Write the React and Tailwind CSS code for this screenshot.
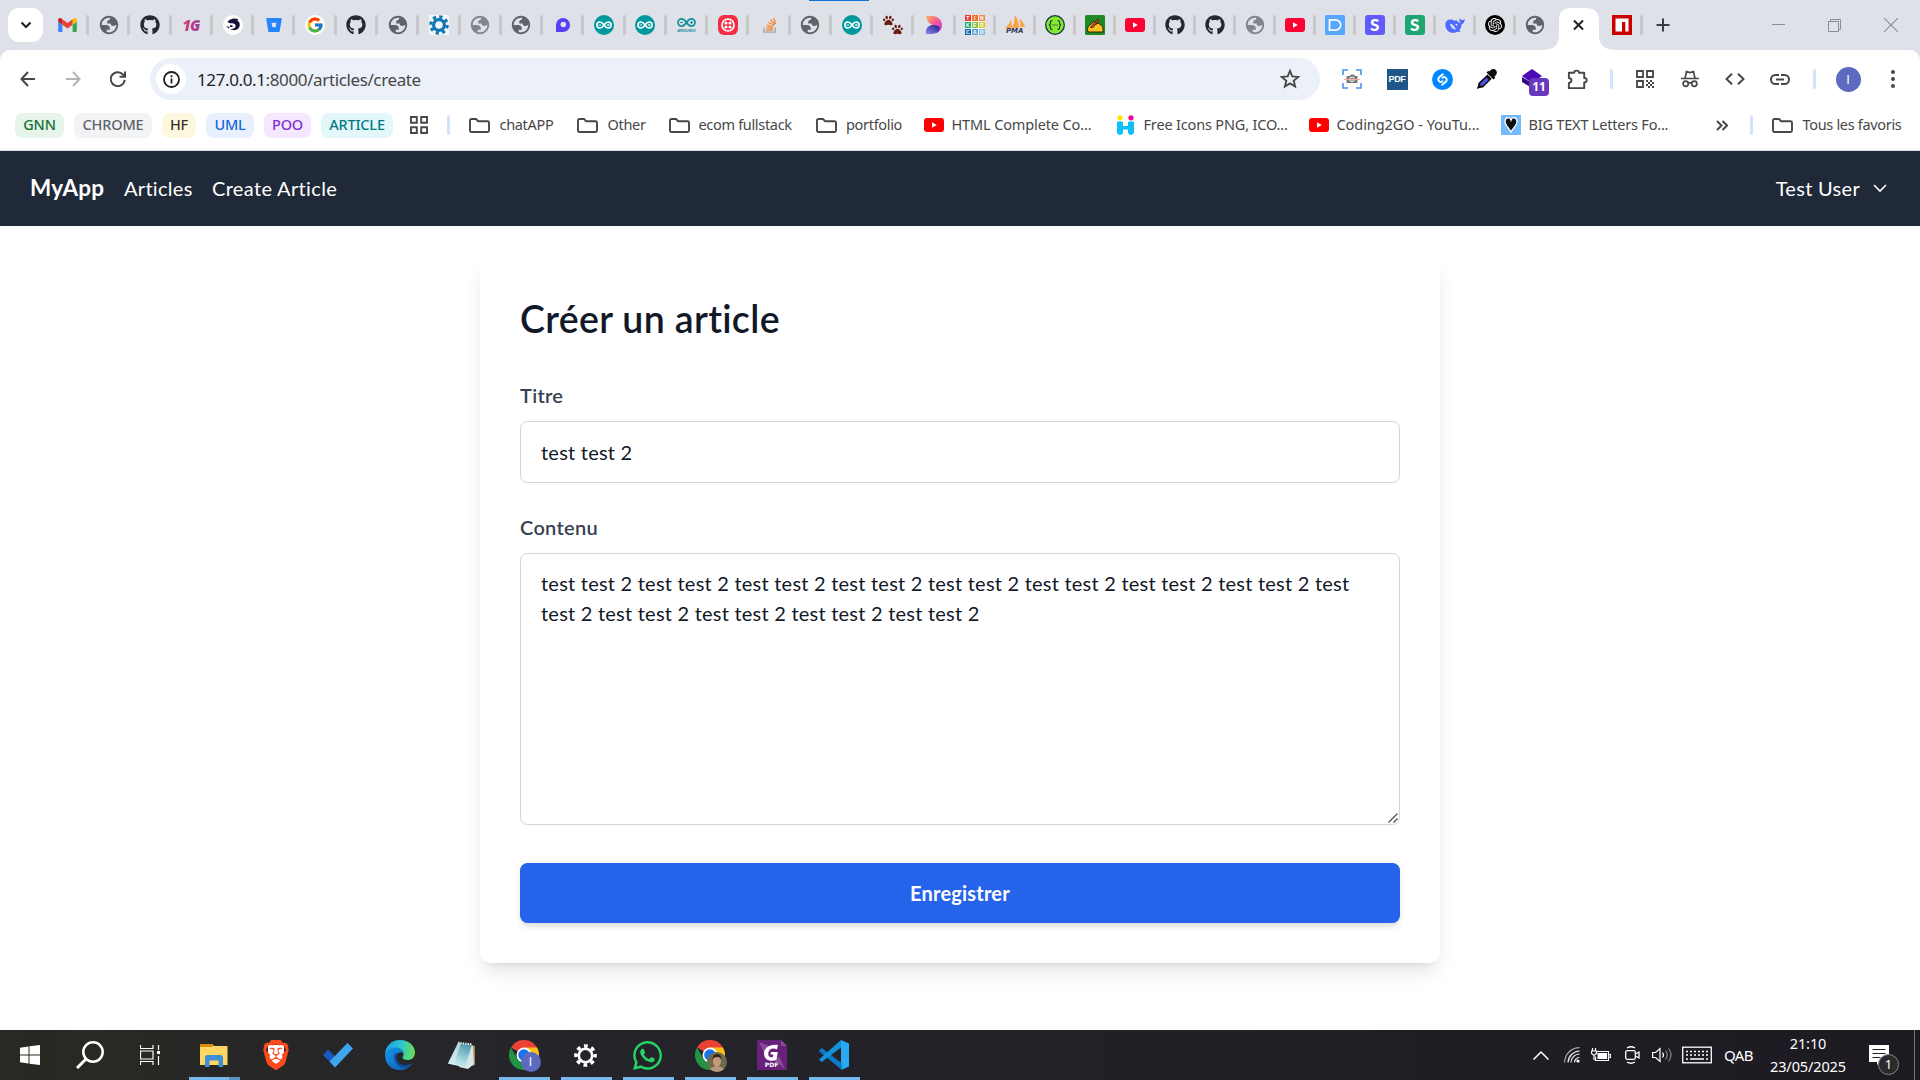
import React from "react";
import { FaGithub, FaBitbucket, FaPaw, FaWhatsapp } from "react-icons/fa";
import { FcGoogle } from "react-icons/fc";
import { SiOpenai, SiBrave } from "react-icons/si";

/* ---------- favicons ---------- */

const Globe = ({ light }) => (
  <svg className={light ? "size-[22px] text-[#80868b]" : "size-[22px] text-[#5f6368]"} viewBox="0 0 24 24" fill="currentColor" fillRule="evenodd">
    <path d="M12 2C6.480 2 2 6.480 2 12s4.480 10 10 10 10-4.480 10-10S17.520 2 12 2zM4 12h4.400c3.407.022 4.922 1.730 4.543 5.127H9.488v2.470a8.004 8.004 0 0 0 10.498-8.083C19.327 12.504 18.332 13 17 13c-2.137 0-3.206-.916-3.206-2.750h-3.748c-.274-2.728.683-4.092 2.870-4.092 0-.975.327-1.597.811-1.970A8.004 8.004 0 0 0 4 12z" />
  </svg>
);

const Gmail = () => (
  <svg className="h-[14px] w-[19px]" viewBox="52 42 88 66">
    <path fill="#4285f4" d="M58 108h14V74L52 59v43c0 3.320 2.690 6 6 6" />
    <path fill="#34a853" d="M120 108h14c3.320 0 6-2.690 6-6V59l-20 15" />
    <path fill="#fbbc04" d="M120 48v26l20-15v-8c0-7.420-8.470-11.650-14.400-7.200" />
    <path fill="#ea4335" d="M72 74V48l24 18 24-18v26L96 92" />
    <path fill="#c5221f" d="M52 51v8l20 15V48l-5.600-4.200c-5.940-4.450-14.400-.22-14.400 7.200" />
  </svg>
);

const GitHub = () => <FaGithub className="size-5 text-[#24292f]" />;

const OneG = () => (
  <span className="bg-gradient-to-r from-[#e0306e] to-[#9a3f9c] bg-clip-text pr-px font-['Open_Sans',sans-serif] text-[15px] leading-5 font-extrabold tracking-[-1px] text-transparent italic">1G</span>
);

const Whale = () => (
  <svg className="size-5" viewBox="0 0 20 20">
    <circle cx="10" cy="10" r="10" fill="#fff" />
    <path d="M4.500 7C6.500 3.500 11.500 2.600 15.500 4.200c-.8.400-1 .7-1.100 1.200 2.600 1.500 3 4.700 1.600 7.100-1.800 3-5.800 3.600-9.500 1.300 3.300.6 5.600-.3 6-2.300.4-1.700-.6-2.900-2.800-3.200C8 8.200 6.500 8.400 4.500 7z" fill="#14123a" />
    <path d="M2.800 11c1.600.8 3 .9 4.200.4L5.600 13.600zM7 10.300h2.500v1.600H7z" fill="#14123a" />
  </svg>
);

const Bitbucket = () => <FaBitbucket className="size-[16px] text-[#2684ff]" />;

const Google = () => (
  <span className="grid size-5 place-items-center rounded-full bg-white"><FcGoogle className="size-[18px]" /></span>
);

const Gear = () => (
  <svg className="size-5 bg-[#f4f7fa]" viewBox="0 0 20 20" fill="none" stroke="#0f78b4">
    <circle cx="10" cy="10" r="5.400" strokeWidth="3.200" />
    <circle cx="10" cy="10" r="8.200" strokeWidth="3.200" strokeDasharray="3.200 3.240" />
  </svg>
);

const PurpleDrop = () => (
  <svg className="size-4" viewBox="0 0 16 16">
    <path d="M1 15V8a7 7 0 1 1 7 7z" fill="#5b3df5" />
    <circle cx="8.300" cy="7.500" r="2.800" fill="#dee1e8" />
  </svg>
);

const Loops = ({ color }) => (
  <g fill="none" stroke={color} strokeWidth="1.500">
    <path d="M10 10C8.500 7.800 7.500 7 5.900 7a3 3 0 0 0 0 6c1.600 0 2.600-.8 4.100-3zM10 10c1.500-2.200 2.500-3 4.100-3a3 3 0 0 1 0 6c-1.600 0-2.600-.8-4.100-3z" />
    <path d="M4.600 10h2.400M13 10h2.400M14.200 8.800v2.400" strokeWidth=".9" />
  </g>
);

const Arduino = () => (
  <svg className="size-5" viewBox="0 0 20 20">
    <circle cx="10" cy="10" r="10" fill="#00979d" />
    <Loops color="#fff" />
  </svg>
);

const ArduinoText = () => (
  <span className="flex w-5 flex-col items-center">
    <svg className="h-[11px] w-[19px]" viewBox="2 5.500 16 9" preserveAspectRatio="none"><Loops color="#12919a" /></svg>
    <span className="font-['Liberation_Sans',sans-serif] text-[4px] leading-[5px] font-bold text-[#12919a]">ARDUINO</span>
  </span>
);

const Twilio = () => (
  <svg className="size-5" viewBox="0 0 20 20">
    <rect width="20" height="20" rx="6" fill="#f22f46" />
    <circle cx="10" cy="10" r="6" fill="none" stroke="#fff" strokeWidth="1.700" />
    <g fill="#fff"><circle cx="8" cy="8" r="1.600" /><circle cx="12" cy="8" r="1.600" /><circle cx="8" cy="12" r="1.600" /><circle cx="12" cy="12" r="1.600" /></g>
  </svg>
);

const StackOverflow = () => (
  <svg className="size-[17px]" viewBox="0 0 16 18" fill="none">
    <path d="M2 11v5h12v-5" stroke="#a5a8ad" strokeWidth="1.500" />
    <path d="M4.300 13.800h7.200M4.500 11.300l7 .7M5.200 8.600l6.700 2M6.800 5.500l6 3.600M9.200 2.800l4.300 5.300M12.400 1l2 6.400" stroke="#f48024" strokeWidth="1.300" />
  </svg>
);

const Paws = () => (
  <span className="flex size-5 flex-col justify-between text-[#6a1b14]">
    <FaPaw className="size-[11px] self-start" />
    <FaPaw className="-mt-1 size-[11px] self-end" />
  </span>
);

const Swirl = () => (
  <svg className="h-[18px] w-4" viewBox="0 0 16 18">
    <defs>
      <linearGradient id="swirlTop" x1="0" y1="0" x2="1" y2="1"><stop offset="0" stopColor="#ffb054" /><stop offset=".5" stopColor="#f7569b" /><stop offset="1" stopColor="#a93df0" /></linearGradient>
      <linearGradient id="swirlLow" x1="1" y1="0" x2="0" y2="1"><stop offset="0" stopColor="#221a75" /><stop offset="1" stopColor="#8a8bff" /></linearGradient>
    </defs>
    <path d="M0 0h6c6 0 10 4 10 9 0 4-2.500 7-6 8.500L7 9C4 8 1 6 0 0z" fill="url(#swirlTop)" />
    <path d="M0 18c-1-6 3-9 7-9 3 0 6 1 7 3-1 4-5 6-9 6z" fill="url(#swirlLow)" />
  </svg>
);

const TINKER = [
  ["T", "bg-[#e8382b]"], ["I", "bg-[#f37021]"], ["N", "bg-[#f08a4a]"],
  ["K", "bg-[#27a567]"], ["E", "bg-[#83c341]"], ["R", "bg-[#d3c928]"],
  ["C", "bg-[#1565ad]"], ["A", "bg-[#5ba3d9]"], ["D", "bg-[#7fb9e0]"],
];
const Tinkercad = () => (
  <span className="grid size-5 grid-cols-3 gap-px bg-white">
    {TINKER.map(([l, c]) => (
      <span key={l} className={`${c} grid place-items-center font-['Liberation_Sans',sans-serif] text-[5px] leading-[6px] font-bold text-white`}>{l}</span>
    ))}
  </span>
);

const Pma = () => (
  <span className="flex flex-col items-center">
    <svg className="h-[13px] w-5" viewBox="0 0 20 13">
      <path d="M0 13C3 11 5 8 6 4l1 9zM7 13C9 9 10 5 9.500 0c3 3 4.500 8 4.500 13zM15 12c.5-4 .2-7-1-9 3 2 5 6 6 9z" fill="#f9a53f" />
    </svg>
    <span className="font-['DejaVu_Sans',sans-serif] text-[7px] leading-[7px] font-bold text-[#35365c] italic">PMA</span>
  </span>
);

const Swagger = () => (
  <svg className="size-5" viewBox="0 0 20 20">
    <circle cx="10" cy="10" r="9.300" fill="#85ea2d" stroke="#173647" strokeWidth="1.300" />
    <path d="M7.500 5.500c-1.500 0-2 .5-2 1.800 0 1.600 0 2.400-1.500 2.700 1.500.3 1.500 1.100 1.500 2.700 0 1.300.5 1.800 2 1.800M12.500 5.500c1.500 0 2 .5 2 1.800 0 1.600 0 2.400 1.500 2.700-1.500.3-1.500 1.100-1.500 2.700 0 1.300-.5 1.800-2 1.800" fill="none" stroke="#173647" strokeWidth="1.200" />
    <path d="M7.300 10h1.200M9.400 10h1.200M11.500 10h1.200" stroke="#173647" strokeWidth="1.200" />
  </svg>
);

const Note = () => (
  <svg className="size-5" viewBox="0 0 20 20">
    <rect width="20" height="20" rx="1.500" fill="#1f8a24" />
    <path d="M2.500 14.500c0-2.500 1.500-4 4-5.500l2-3 2 3.500 3-1.500 1.500 1.500c2 .5 3 2.500 3 5V17H3z" fill="#fcc21b" stroke="#3a1d0a" strokeWidth="1" />
    <path d="M5.500 12.500L12.500 4l1.500 1.300L8 12.500z" fill="#e0402f" stroke="#3a1d0a" strokeWidth=".8" />
  </svg>
);

const YouTube = ({ flat }) => (
  <svg className="h-[14px] w-5" viewBox="0 0 20 14">
    <rect width="20" height="14" rx="3" fill={flat ? "#f00" : "#ff0033"} />
    <path d="M8 4.200v5.600L12.800 7z" fill="#fff" />
  </svg>
);

const Letter = ({ bg, children }) => (
  <span className={`${bg} grid size-5 place-items-center rounded-[3px] font-['Lato',sans-serif] text-[17px] leading-5 font-black text-white`}>{children}</span>
);

const LetterD = () => (
  <svg className="size-5" viewBox="0 0 20 20">
    <rect width="20" height="20" rx="1.500" fill="#56a8ff" />
    <path d="M4.500 4.800h6a5.200 5.200 0 0 1 0 10.400h-6z" fill="none" stroke="#fff" strokeWidth="1.700" />
  </svg>
);

const DeepSeek = () => (
  <svg className="h-[15px] w-5" viewBox="0 0 20 15">
    <path d="M8 2C4 .5.500 2.500.300 6.500.200 11.500 4 15 8.500 14.800c1.500 0 3-.5 4-1.300 1 .6 2 .7 2.800.3-.6-.6-.8-1.200-.8-2 1.500-1.800 2-3.600 2-5.600C18.500 5.800 19.700 4 19.800 1c-1 .8-1.800 1-2.700 1-.9 0-1.500-.3-2-2-1.200 1.800-.7 3.600.6 5-1.200.2-2.200-.5-3.200-1.700-.7-.9-1.300-1.200-2.200-1-.4.2-.2.700 0 1z" fill="#4d6bfe" />
    <path d="M5 5.500c2.500.5 4.500 3 6 6-3 .3-5.500-2-6-6z" fill="#dee1e8" />
    <circle cx="11.500" cy="6.800" r="1.100" fill="#dee1e8" />
  </svg>
);

const OpenAI = () => (
  <span className="grid size-5 place-items-center rounded-full bg-black"><SiOpenai className="size-[14px] text-white" /></span>
);

const Npm = () => (
  <svg className="size-5" viewBox="0 0 20 20">
    <rect width="20" height="20" fill="#cb0000" />
    <path d="M3.500 3.500h13v13h-3.200V7H10v9.500H3.500z" fill="#fff" />
  </svg>
);

const LightGlobe = () => <Globe light />;

const WIDE_TABS = [
  Gmail, Globe, GitHub, OneG, Whale, Bitbucket, Google, GitHub, Globe, Gear,
  LightGlobe, Globe, PurpleDrop, Arduino, Arduino, ArduinoText, Twilio,
  StackOverflow, Globe, Arduino, Paws, Swirl,
];
const TABS = [
  Tinkercad, Pma, Swagger, Note, YouTube, GitHub, GitHub, LightGlobe, YouTube, LetterD,
  () => <Letter bg="bg-[#625afa]">S</Letter>, () => <Letter bg="bg-[#1ea672]">S</Letter>,
  DeepSeek, OpenAI, Globe,
];

const Tab = ({ Icon, wide, last }) => (
  <div className={`${wide ? "w-[41.27px]" : "w-10"} flex h-5 shrink-0 items-center`}>
    <div className="flex h-5 flex-1 items-center justify-center pl-px"><Icon /></div>
    <div className={`${last ? "bg-transparent" : "bg-[#c7c7c9]"} h-5 w-[3px] rounded-full`} />
  </div>
);

const TabStrip = () => (
  <div className="relative flex h-[50px] bg-[#dee1e8]">
    <div className="absolute top-0 left-[809px] h-px w-[60px] bg-[#0a74d6]" />
    <div className="ml-2 flex h-[42px] w-[39.900px] items-end">
      <div className="grid h-[34px] w-[35px] place-items-center rounded-[11px] bg-white">
        <svg className="size-4" viewBox="0 0 16 16" fill="none" stroke="#1f1f1f" strokeWidth="2"><path d="M3.500 5.500L8 10l4.500-4.500" /></svg>
      </div>
    </div>
    <div className="flex items-center">
      {WIDE_TABS.map((I, i) => <Tab key={i} Icon={I} wide />)}
      {TABS.map((I, i) => <Tab key={i} Icon={I} last={i === TABS.length - 1} />)}
    </div>
    <svg className="-ml-[13px] mt-[7px] h-[43px] w-[73px]" viewBox="0 0 73 43">
      <path d="M0 43c10 0 16-5 16-14V13C16 5 20 1 28 1h15c8 0 13 4 13 12v16c0 9 6 14 17 14z" fill="#fff" />
      <path d="M31 13.500l9 9M40 13.500l-9 9" stroke="#1f1f1f" strokeWidth="2" />
    </svg>
    <div className="-ml-[13px] flex items-center"><Tab Icon={Npm} /></div>
    <div className="ml-[13px] flex items-center">
      <svg className="size-[14px]" viewBox="0 0 14 14" stroke="#3c3f42" strokeWidth="2"><path d="M7 .5v13M.5 7h13" /></svg>
    </div>
    <div className="ml-auto flex items-center gap-[43px] pr-[22px] text-[#8b8d91]">
      <svg className="size-[13px]" viewBox="0 0 13 13" stroke="currentColor"><path d="M0 5.500h13" /></svg>
      <svg className="size-[13px]" viewBox="0 0 13 13" fill="none" stroke="currentColor"><path d="M.5 2.500h10v10H.500zM2.500 2.500v-2h10v10h-2" /></svg>
      <svg className="size-[14px]" viewBox="0 0 13 13" stroke="currentColor"><path d="M0 0l13 13M13 0L0 13" /></svg>
    </div>
  </div>
);

/* ---------- toolbar ---------- */

const Ico = ({ className = "size-[22px]", vb = "0 0 24 24", w = 2, children }) => (
  <svg className={className} viewBox={vb} fill="none" stroke="currentColor" strokeWidth={w}>{children}</svg>
);
const Cell = ({ children }) => <div className="flex w-[45px] items-center justify-center">{children}</div>;
const ToolSep = () => <div className="mx-[10px] h-5 w-[3px] rounded-full bg-[#d3e3fd]" />;

const Toolbar = () => (
  <div className="flex h-[58px] items-center text-[#474747]">
    <div className="ml-[5.500px] flex w-[144.500px] shrink-0">
      <Cell><Ico className="size-4" vb="0 0 16 16"><path d="M15 8H1.500M8 1L1.500 8 8 15" /></Ico></Cell>
      <Cell><Ico className="size-4 text-[#b3b3b3]" vb="0 0 16 16"><path d="M1 8h13.500M8 1l6.500 7L8 15" /></Ico></Cell>
      <Cell><Ico className="size-4" vb="0 0 16 16"><path d="M14.700 9A7 7 0 1 1 13 3.500L15 5.500M15 .5v5.300H9.500" /></Ico></Cell>
    </div>
    <div className="flex h-[42px] w-[1170px] shrink-0 items-center rounded-full bg-[#ebf0f9] pr-[19px] pl-[6px]">
      <div className="grid size-[30px] place-items-center rounded-full bg-white">
        <Ico className="size-[17px] text-[#1f1f1f]" vb="0 0 17 17" w="1.800"><circle cx="8.500" cy="8.500" r="7.500" /><path d="M8.500 7.500v5M8.500 4.300v1.900" /></Ico>
      </div>
      <div className="ml-[11px] flex-1 pt-px font-['Noto_Sans',sans-serif] text-[17px] tracking-[-0.380px] text-[#474747]"><span className="text-[#1f1f1f]">127.0.0.1</span>:8000/articles/create</div>
      <Ico className="size-[22px]" w="2"><path d="M12 3.200l2.500 6 6.500.5-5 4.200 1.600 6.300L12 16.800l-5.600 3.400L8 13.900 3 9.700l6.500-.5z" /></Ico>
    </div>
    <div className="ml-auto flex items-center pr-[4.500px]">
      <Cell>
        <svg className="size-5" viewBox="0 0 20 20" fill="none">
          <path d="M1 6V1h5M14 1h5v5M19 14v5h-5M6 19H1v-5" stroke="#4f8df5" strokeWidth="1.600" />
          <path d="M4.500 7h3L9 5.500h3L13 7h2.500v7h-11z" fill="#7b7b7b" />
          <circle cx="10" cy="10.300" r="2.200" stroke="#fff" /><path d="M2 10.500h16" stroke="#f2aaa5" />
        </svg>
      </Cell>
      <Cell><span className="grid size-[21px] place-items-center bg-[#1d5687] font-['Liberation_Sans',sans-serif] text-[9px] leading-none font-bold tracking-[-0.300px] text-white">PDF</span></Cell>
      <Cell>
        <svg className="size-[21px]" viewBox="0 0 21 21" fill="none">
          <circle cx="10.500" cy="10.500" r="10.500" fill="#08f" />
          <path d="M10.800 5.200L7.500 8c-1.600 1.400-1.600 3-.4 4.200 1 1 2.400 1 3.400 0M10.200 15.800l3.300-2.800c1.600-1.400 1.600-3 .4-4.200-1-1-2.400-1-3.400 0" stroke="#fff" strokeWidth="1.900" strokeLinecap="round" />
        </svg>
      </Cell>
      <Cell>
        <svg className="size-5" viewBox="0 0 20 20">
          <path d="M12.500 2.500c2-3 5-3 6.500-1.200S20 6 17.300 7.600l1 1.200-1.800 1.700-7-7 1.800-1.700z" fill="#0a0a0a" />
          <path d="M10.500 5.500l4.200 4.200L6 18.500l-3.500.6L.5 20 0 19l1-2 .4-3z" fill="#0a0a0a" />
          <path d="M9.500 8.500l2.300 2.300L6 16.500l-3 .3.500-2.500z" fill="#4a55e8" />
        </svg>
      </Cell>
      <Cell>
        <div className="relative size-5">
          <svg className="size-5" viewBox="0 0 20 20"><path d="M10 0l10 7-10 7L0 7z" fill="#4b0bb5" /><path d="M0 8l10 6v5L0 13z" fill="#2f0a80" /></svg>
          <span className="absolute top-[9px] left-[7px] grid h-[18px] w-5 place-items-center rounded-[4px] bg-[#6938be] font-['Open_Sans',sans-serif] text-[12px] leading-none font-bold text-white">11</span>
        </div>
      </Cell>
      <Cell><Ico className="size-[23px]" w="2"><path d="M3 5h5.500c0-3 5-3 5 0H19v5.500c3.500 0 3.500 4.500 0 4.500v6H3v-5.500c3.500-.5 3.500-4.500 0-5z" strokeLinejoin="round" /></Ico></Cell>
      <ToolSep />
      <Cell>
        <Ico className="size-[18px]" vb="0 0 18 18" w="1.800"><path d="M1 1h6v6H1zM11 1h6v6h-6zM1 11h6v6H1z" /><path d="M10 11h2M14 11h2M12 13h2M16 13h2M10 15h2M14 15h2M12 17h2M16 17h2" /></Ico>
      </Cell>
      <Cell>
        <Ico className="size-[18px]" vb="0 0 18 18" w="1.700"><path d="M0 8.500h18M4 8.500L5.500 1.500l3.500 1 3.500-1L14 8.500" /><circle cx="4.700" cy="13.800" r="2.600" /><circle cx="13.300" cy="13.800" r="2.600" /><path d="M7.200 13.300c1-.8 2.600-.8 3.600 0" /></Ico>
      </Cell>
      <Cell><Ico className="h-3 w-5" vb="0 0 20 12"><path d="M7 .7L1.500 6 7 11.300M13 .7L18.500 6 13 11.300" /></Ico></Cell>
      <Cell><Ico className="h-[11px] w-5" vb="0 0 20 11"><path d="M9 1H5.500a4.500 4.500 0 0 0 0 9H9M11 1h3.500a4.500 4.500 0 0 1 0 9H11M6 5.500h8" /></Ico></Cell>
      <ToolSep />
      <Cell><span className="grid size-[25px] place-items-center rounded-full bg-[#5c6bc0] font-['Liberation_Sans',sans-serif] text-[13px] leading-none text-white">I</span></Cell>
      <Cell><svg className="h-[18px] w-1" viewBox="0 0 4 18" fill="currentColor"><circle cx="2" cy="2" r="2" /><circle cx="2" cy="9" r="2" /><circle cx="2" cy="16" r="2" /></svg></Cell>
    </div>
  </div>
);

/* ---------- bookmarks ---------- */

const Chip = ({ className, children }) => (
  <div className={`${className} flex h-[25px] shrink-0 items-center justify-center rounded-lg pb-px text-[14.500px] font-medium tracking-[-0.200px]`}>{children}</div>
);
const Folder = () => (
  <svg className="h-[15px] w-[21px]" viewBox="0 0 21 15" fill="none" stroke="#474747" strokeWidth="1.900"><path d="M1 12.500v-10Q1 1 2.500 1H7l2.200 2.200h9.300q1.500 0 1.500 1.500v7.800q0 1.500-1.500 1.500h-16Q1 14 1 12.500z" /></svg>
);
const Freepik = () => (
  <svg className="mr-px h-5 w-[19px]" viewBox="0 0 19 20">
    <circle cx="4" cy="2.800" r="2.600" fill="#ffe600" /><circle cx="15" cy="2.800" r="2.600" fill="#f5068c" />
    <path d="M1 7q3-1.500 6 0v4h5V7q3-1.500 6 0v11q-3 4-6 0v-3.500H7V18q-3 4-6 0z" fill="#0bc1f5" />
  </svg>
);
const Heart = () => (
  <svg className="size-5" viewBox="0 0 20 20">
    <rect width="20" height="20" fill="#74bbfb" />
    <path d="M10 17C8 13 4 10.500 4 6.500 4 2 9 1.500 10 5c1-3.500 6-3 6 1.500C16 10.500 12 13 10 17z" fill="#0b0f14" stroke="#fff" strokeWidth="1.300" />
  </svg>
);
const Mark = ({ icon, className, tight = "tracking-[-0.320px]", children }) => (
  <div className={`${className} flex shrink-0 items-center whitespace-nowrap`}>
    {icon}
    <span className={`${tight} text-[14.500px]`}>{children}</span>
  </div>
);
const BarSep = () => <div className="h-5 w-[3px] shrink-0 rounded-full bg-[#d3e3fd]" />;

const BookmarkBar = () => (
  <div className="flex h-[43px] items-start border-b border-[#dcdfe3] pt-[4px] font-['Noto_Sans',sans-serif] text-[#474747]">
    <div className="flex h-[26px] w-full items-center pl-[15px]">
      <div className="flex gap-[10px]">
        <Chip className="w-[49px] bg-[#e6f4ea] text-[#137333]">GNN</Chip>
        <Chip className="w-[78px] bg-[#f1f3f4] text-[#5f6368]">CHROME</Chip>
        <Chip className="w-[34px] bg-[#fef7e0] text-[#3c3025]">HF</Chip>
        <Chip className="w-[48px] bg-[#e8f0fe] text-[#1967d2]">UML</Chip>
        <Chip className="w-[47px] bg-[#f3e8fd] text-[#8430ce]">POO</Chip>
        <Chip className="w-[72px] bg-[#e4f7fb] text-[#007b83]">ARTICLE</Chip>
      </div>
      <div className="ml-[17px] flex w-[37px] shrink-0"><Ico className="size-[18px]" vb="0 0 18 18" w="1.900"><path d="M1 1h5.800v5.800H1zM11.200 1H17v5.800h-5.800zM1 11.200h5.800V17H1zM11.200 11.200H17V17h-5.800z" /></Ico></div>
      <BarSep />
      <div className="ml-[19px] flex">
        <Mark className="w-[108px] gap-[9.500px]" icon={<Folder />}>chatAPP</Mark>
        <Mark className="w-[91.500px] gap-[9.500px]" icon={<Folder />}>Other</Mark>
        <Mark className="w-[147.500px] gap-[9px]" icon={<Folder />}>ecom fullstack</Mark>
        <Mark className="w-[108px] gap-[9px]" icon={<Folder />}>portfolio</Mark>
        <Mark className="w-[192px] gap-[7.500px]" tight="tracking-[-0.130px]" icon={<YouTube flat />}>HTML Complete Co...</Mark>
        <Mark className="w-[193px] gap-[7.500px]" tight="tracking-[-0.170px]" icon={<Freepik />}>Free Icons PNG, ICO...</Mark>
        <Mark className="w-[192px] gap-[7.500px]" tight="tracking-[-0.060px]" icon={<YouTube flat />}>Coding2GO - YouTu...</Mark>
        <Mark className="w-[215px] gap-[7.500px]" tight="tracking-[-0.200px]" icon={<Heart />}>BIG TEXT Letters Fo...</Mark>
      </div>
      <Ico className="mr-[22px] h-[11px] w-3 shrink-0" vb="0 0 12 11"><path d="M1 1l4.500 4.500L1 10M6.500 1L11 5.500 6.500 10" /></Ico>
      <BarSep />
      <Mark className="ml-[19px] gap-[9.500px]" icon={<Folder />}>Tous les favoris</Mark>
    </div>
  </div>
);

/* ---------- page ---------- */

const Page = () => (
  <div className="flex h-[879px] flex-col bg-white font-['Lato',sans-serif] text-xl leading-[30px] tracking-[0.300px]">
    <nav className="flex h-[75px] shrink-0 items-center bg-[#1f2937] px-[30px] pb-[2px] text-white">
      <span className="w-[94px] text-[22.500px] font-bold tracking-[0.250px]">MyApp</span>
      <span className="w-[88px]">Articles</span>
      <span className="tracking-[0.350px]">Create Article</span>
      <span className="ml-auto">Test User</span>
      <svg className="mt-[2px] mr-[3px] ml-[13px] h-[9px] w-[14px]" viewBox="0 0 14 9" fill="none" stroke="currentColor" strokeWidth="1.600"><path d="M1 1l6 6 6-6" /></svg>
    </nav>
    <main className="mx-auto mt-[30px] flex w-[960px] flex-col rounded-[10px] bg-white p-10 shadow-[0_12.500px_18.750px_-3.750px_rgba(0,0,0,0.100),0_5px_7.500px_-5px_rgba(0,0,0,0.100)]">
      <h1 className="mb-10 text-[37.500px] leading-[46px] font-semibold tracking-[0.350px] text-[#111827]">Créer un article</h1>
      <label className="mb-[13px] leading-[26px] font-semibold text-[#374151]">Titre</label>
      <input readOnly defaultValue="test test 2" className="mb-[31px] h-[62px] rounded-[7.500px] border border-[#d1d5db] px-5 tracking-[0.230px] text-[#111827] outline-none" />
      <label className="mb-[13px] leading-[26px] font-semibold text-[#374151]">Contenu</label>
      <div className="relative mb-[38px] flex">
        <textarea readOnly className="h-[272px] w-full resize-none rounded-[7.500px] border border-[#d1d5db] px-5 pt-[14px] tracking-[0.230px] text-[#111827] outline-none" defaultValue={"test test 2 test test 2 test test 2 test test 2 test test 2 test test 2 test test 2 test test 2 test\ntest 2 test test 2 test test 2 test test 2 test test 2"} />
        <svg className="absolute right-[2px] bottom-[2px] size-[10px]" viewBox="0 0 10 10" stroke="#4a4a4a" strokeWidth="1.200"><path d="M.5 9.500l9-9M5.500 9.500l4-4" /></svg>
      </div>
      <button className="h-[60px] rounded-[7.500px] bg-[#2563eb] font-bold tracking-[0.200px] text-white shadow-[0_5px_7.500px_-1.250px_rgba(0,0,0,0.100),0_2.500px_5px_-2.500px_rgba(0,0,0,0.100)]">Enregistrer</button>
    </main>
  </div>
);

/* ---------- taskbar ---------- */

const Explorer = () => (
  <svg className="h-6 w-7" viewBox="0 0 28 24">
    <path d="M0 1h12l2 2h13.500v19H0z" fill="#fdd663" /><path d="M0 1h12.500v3H0z" fill="#d98f05" />
    <path d="M5 24V14.500q0-2.500 2.500-2.500h13q2.500 0 2.500 2.500V24h-4.500v-6.500h-9V24z" fill="#3f8fd6" />
  </svg>
);
const Brave = () => (
  <div className="relative grid size-[30px] place-items-center">
    <div className="absolute top-[5px] left-[7px] h-[19px] w-4 rounded-b-lg bg-white" />
    <SiBrave className="relative size-[30px] text-[#fb4a1d]" />
  </div>
);
const Todo = () => (
  <svg className="h-[25px] w-[30px]" viewBox="0 0 30 25"><path d="M0 12l5-5.500 12.500 12L12 24z" fill="#185abd" /><path d="M6.500 18.500L24.500 0 30 5.500 12 24.500z" fill="#41a5ee" /></svg>
);
const Edge = () => (
  <svg className="size-[30px]" viewBox="0 0 30 30">
    <defs>
      <linearGradient id="edgeTop" x1="0" y1=".4" x2="1" y2=".5"><stop offset="0" stopColor="#1a9de8" /><stop offset=".5" stopColor="#2bc3d2" /><stop offset="1" stopColor="#6be04e" /></linearGradient>
      <linearGradient id="edgeLow" x1="0" y1="0" x2="1" y2="1"><stop offset="0" stopColor="#1597e8" /><stop offset="1" stopColor="#0b5cad" /></linearGradient>
    </defs>
    <path d="M0 15C0 6 6.500 0 15 0c9 0 15 6 15 12.500 0 5-3.500 7.500-7.500 7.500-3.500 0-5-1.500-5-2.500s1-1.500 1-3.500c0-3-3-6-7-6C6 8 1.500 11.500 0 15z" fill="url(#edgeTop)" />
    <path d="M0 15c1-5 6-7.500 10.500-7.500 4 0 8 2.500 8 6-1-1-2.500-1.500-4-1-3 1-4 4-3 7.500 1.500 5 8 6.500 13.500 4.500l2.500-1.500c-3 5-8 7.300-13 7C6 30 0 23.500 0 15z" fill="url(#edgeLow)" />
    <path d="M11.500 12.500C7.500 14 8 23 15.500 27c4 1.500 8 .5 11.500-3.500-6 3-13 2-15-3.500-1-2.800-1-5 .5-7.500z" fill="#10499b" />
  </svg>
);
const Notepad = () => (
  <svg className="size-7" viewBox="0 0 28 28">
    <defs>
      <linearGradient id="padFace" x1=".7" y1="0" x2=".3" y2="1"><stop offset="0" stopColor="#4f97a8" /><stop offset=".6" stopColor="#9ed4de" /><stop offset="1" stopColor="#dff3f6" /></linearGradient>
    </defs>
    <path d="M24 4l3 1v19l-3 1z" fill="#a8834f" />
    <path d="M22 3.500l3 1.500 1 18-6 5-9-2z" fill="#d9e4e8" />
    <path d="M10 2l14 1.500-7 23L0 22.500z" fill="url(#padFace)" />
    <path d="M10 2l3 .3L6 23.800l-6-1.300z" fill="#d5edf1" opacity=".7" />
    <path d="M10 1.700l13.500 1.500" stroke="#e8e8e8" strokeWidth="2" strokeDasharray="1.400 1" />
  </svg>
);
const Chrome = ({ children }) => (
  <div className="relative size-[30px]">
    <svg className="size-[30px]" viewBox="0 0 30 30">
      <path d="M15 15L2 7.500A15 15 0 0 1 28 7.500z" fill="#ea4335" />
      <path d="M15 15l6.500 3.700L15 30A15 15 0 0 0 28 7.500H15z" fill="#fbc116" />
      <path d="M15 15l6.500 3.700L15 30A15 15 0 0 1 2 7.500l6.500 11.200z" fill="#229342" />
      <circle cx="15" cy="15" r="7.500" fill="#fff" /><circle cx="15" cy="15" r="5.800" fill="#1a73e8" />
    </svg>
    {children}
  </div>
);
const Cog = () => (
  <svg className="size-[23px]" viewBox="0 0 23 23" fill="none" stroke="#fff"><circle cx="11.500" cy="11.500" r="6.700" strokeWidth="2.600" /><circle cx="11.500" cy="11.500" r="9.500" strokeWidth="3.600" strokeDasharray="3.730 3.730" strokeDashoffset="1.800" /></svg>
);
const Foxit = () => (
  <div className="relative size-[30px]">
    <svg className="size-[30px]" viewBox="0 0 30 30">
      <path d="M0 0h24l6 6v24H0z" fill="#68217a" /><path d="M24 0l6 6h-6z" fill="#8d4a9c" /><path d="M2 2l10 4-5 7zM28 29l-6-13-4 5z" fill="#8d4a9c" />
      <path d="M21 5C13 3.500 7 8 7 13.500 7 19 12 22.500 19.500 20l1.300-8H14l-.5 2.500h2.800l-.5 2.500c-3 .8-4.800-.8-4.500-3.800C11.700 9 15.500 7 20 9.500c.3-1.500.7-3 1-4.500z" fill="#fff" />
    </svg>
    <span className="absolute bottom-[2px] left-0 w-[30px] text-center font-['DejaVu_Sans',sans-serif] text-[6px] leading-[6px] font-bold text-white">PDF</span>
  </div>
);
const VSCode = () => (
  <svg className="size-[30px]" viewBox="0 0 30 30">
    <path d="M22 0l8 3.500v23L22 30z" fill="#29a9f2" />
    <path d="M0 10.500L2.800 8 23 23.500V30L.3 11.500z" fill="#0b7bc9" />
    <path d="M0 19.500L22 0v7.500L2.800 22z" fill="#1591dc" />
  </svg>
);
const PortraitBadge = () => (
  <svg className="absolute top-3 left-3 size-5" viewBox="0 0 20 20">
    <clipPath id="face"><circle cx="10" cy="10" r="10" /></clipPath>
    <g clipPath="url(#face)">
      <rect width="20" height="20" fill="#716a4c" /><path d="M1 20q3-6 9-6t9 6z" fill="#b59a7c" />
      <ellipse cx="10" cy="9" rx="4" ry="5.500" fill="#c49a7c" /><path d="M5.500 8q0-6 4.500-6t4.500 6q-1-3-4.500-3t-4.500 3z" fill="#33261d" />
    </g>
  </svg>
);
const LetterBadge = () => (
  <span className="absolute top-3 left-3 grid size-5 place-items-center rounded-full bg-[#5c6bc0] font-['Liberation_Sans',sans-serif] text-[12px] leading-none text-white">I</span>
);

const APPS = [
  [<Explorer />, "split"], [<Brave />], [<Todo />], [<Edge />], [<Notepad />],
  [<Chrome><LetterBadge /></Chrome>, "on"],
  [<Cog />, "on"], [<FaWhatsapp className="size-[33px] text-[#25d366]" />, "on"],
  [<Chrome><PortraitBadge /></Chrome>, "on"],
  [<Foxit />, "on"], [<VSCode />, "on"],
];

const Taskbar = () => (
  <div className="flex h-[50px] bg-gradient-to-r from-[#292923] via-[#25242b] via-30% to-[#1d1b21] text-white">
    <div className="flex w-[60px] items-center justify-center">
      <svg className="size-5" viewBox="0 0 20 20" fill="#fff"><path d="M0 2.800L8.500 1.500v8H0zM9.500 1.300L20 0v9.500H9.500zM0 10.500h8.500v8L0 17.200zM9.500 10.500H20V20L9.500 18.700z" /></svg>
    </div>
    <div className="flex w-[60px] items-center justify-center">
      <svg className="size-7" viewBox="0 0 28 28" fill="none" stroke="#fff" strokeWidth="2.500"><circle cx="17" cy="11" r="9.700" /><path d="M10 18l-9 9" strokeWidth="3" /></svg>
    </div>
    <div className="flex w-[63.500px] items-center justify-center pr-[3.500px]">
      <svg className="size-5" viewBox="0 0 20 20" fill="none" stroke="#fff" strokeWidth="1.200"><path d="M.5 6h12.500v8H.500zM.5 0v3.500H13V0M.5 20v-3.500H13V20M18.500 0v5M18.500 11v9" /><path d="M17 6h3v3h-3z" fill="#fff" stroke="none" /></svg>
    </div>
    {APPS.map(([icon, state], i) => (
      <div key={i} className="flex w-[62px] flex-col items-center">
        <div className="flex h-[47px] items-center pt-[3px] pr-[2px]">{icon}</div>
        {state === "on" && <div className="h-[3px] w-[51px] bg-[#76b9ed]" />}
        {state === "split" && <div className="flex h-[3px] w-[51px] bg-[#5f93bf]"><div className="h-[3px] w-10 bg-[#76b9ed]" /></div>}
      </div>
    ))}
    <div className="ml-auto flex items-center font-['Noto_Sans',sans-serif]">
      <svg className="mr-[15px] h-[9px] w-4" viewBox="0 0 16 9" fill="none" stroke="#fff" strokeWidth="1.500"><path d="M.5 8.500L8 1l7.500 7.500" /></svg>
      <svg className="mr-[11px] size-4" viewBox="0 0 16 16" fill="none" stroke="#fff" strokeWidth="1.200"><path d="M10.500 15.500a5 5 0 0 1 5-5M7 15.500A8.500 8.500 0 0 1 15.500 7M4 15.500A12 12 0 0 1 15.500 4" opacity=".9" /><path d="M.6 15.500A15 15 0 0 1 15.500.6" opacity=".6" /><circle cx="14" cy="14" r="1.600" fill="#fff" stroke="none" /></svg>
      <svg className="mr-[14px] h-[14px] w-5" viewBox="0 0 20 14" fill="none" stroke="#fff" strokeWidth="1.200"><path d="M5 3.500h12.500v9H4.500v-4M18 6.500h1.500v3H18" /><path d="M6.500 5h9.500v6H6.500z" fill="#fff" stroke="none" /><path d="M1.500 0v3M4.500 0v3M.5 3h5v2.500L3 7.500.5 5.500zM3 7v5" /></svg>
      <svg className="mr-3 h-[18px] w-[15px]" viewBox="0 0 15 18" fill="none" stroke="#fff" strokeWidth="1.300"><rect x=".7" y="4.700" width="9.600" height="8.600" rx="1.500" /><path d="M10.500 8l3.500-2v6l-3.500-2M2 2Q6-.5 10 2M2 16q4 2.500 8 0" /></svg>
      <svg className="mr-[9px] h-4 w-[21px]" viewBox="0 0 21 16" fill="none" stroke="#fff" strokeWidth="1.200"><path d="M.6 5.500h3L8 1.500v13l-4.400-4h-3zM10.500 5.500q2 2.500 0 5" /><path d="M13.500 3.500q3.500 4.500 0 9M16.500 1.500q5 6.500 0 13" opacity=".45" /></svg>
      <svg className="mr-3 h-[18px] w-[30px]" viewBox="0 0 30 18" fill="none" stroke="#fff" strokeWidth="1.300"><rect x=".7" y="1.200" width="28.600" height="15.600" /><path d="M4 5.500h22M4 9h22" strokeDasharray="2 2" /><path d="M4 13h2M8 13h14M24 13h2" /></svg>
      <span className="w-[30px] text-[15px] tracking-[-0.600px]">QAB</span>
      <div className="ml-[14px] w-[80px] text-center text-[14.500px] leading-[23px] tracking-[-0.120px]">21:10<br />23/05/2025</div>
      <div className="relative ml-[21px] h-5 w-5">
        <svg className="h-5 w-5" viewBox="0 0 20 20"><path d="M0 0h20v17h-9l-3 3v-3H0z" fill="#fff" /><path d="M3.500 4.500h13M3.500 8.500h13M3.500 12.500h8" stroke="#222" strokeWidth="1.200" /></svg>
        <span className="absolute top-[9px] left-[9px] grid size-[21px] place-items-center rounded-full border border-[#8a8a8a] bg-[#2b2b2e] text-[13px] leading-none">1</span>
      </div>
      <div className="ml-[25px] h-[50px] w-[6px] border-l border-[#77777a]" />
    </div>
  </div>
);

export default function App() {
  return (
    <div className="flex h-[1080px] w-[1920px] flex-col overflow-hidden bg-[#dee1e8]">
      <TabStrip />
      <div className="h-[101px] shrink-0 rounded-t-[10px] bg-white">
        <Toolbar />
        <BookmarkBar />
      </div>
      <Page />
      <Taskbar />
    </div>
  );
}
